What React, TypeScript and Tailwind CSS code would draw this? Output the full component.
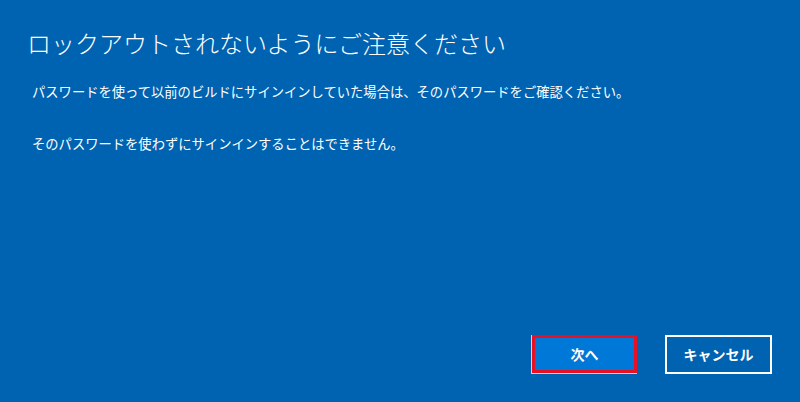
import React from 'react';

const font = { fontFamily: '"Noto Sans CJK JP", "Noto Sans", sans-serif' };

const App: React.FC = () => {
    return (
        <div
            className="bg-[#0063b1] w-[800px] h-[402px] text-white flex flex-col overflow-hidden"
            style={font}
        >
            {/* Title and message */}
            <div className="flex-1 pl-[27px] pt-[27px]">
                <h1 className="text-[24px] leading-[32px] font-light">
                    ロックアウトされないようにご注意ください
                </h1>
                <div className="pl-[5px] mt-[23px] text-[13.3px] leading-[20px]">
                    <p>パスワードを使って以前のビルドにサインインしていた場合は、そのパスワードをご確認ください。</p>
                    <p className="mt-[32px]">そのパスワードを使わずにサインインすることはできません。</p>
                </div>
            </div>

            {/* Buttons */}
            <div className="flex justify-end gap-[28px] pr-[28px] pb-[28px]">
                <button className="w-[106px] h-[39px] border-l border-b border-[#c8d8ea] p-0">
                    <div className="w-full h-full border-[3px] border-[#e81123] bg-[#0078d7] flex items-center justify-center text-[14px] font-bold">
                        次へ
                    </div>
                </button>
                <button className="w-[107px] h-[39px] border-2 border-white bg-[#0063b1] flex items-center justify-center text-[14px] font-bold">
                    キャンセル
                </button>
            </div>
        </div>
    );
};

export default App;
